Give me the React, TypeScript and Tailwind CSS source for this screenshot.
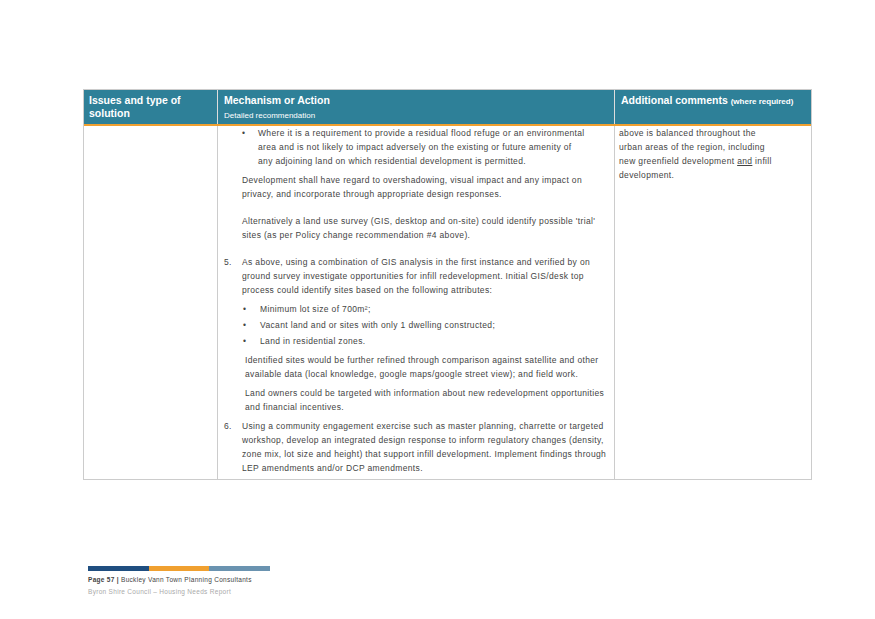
export default function App() {
  const t = "text-[8.5px] leading-[14px] text-[#444] tracking-[0.35px]";
  return (
    <div className="w-[875px] h-[619px] bg-white relative" style={{ fontFamily: '"Liberation Sans", Arial, sans-serif' }}>
      <div className="absolute left-[83px] top-[89px] w-[729px] border border-[#ccc]">
        <div className="grid grid-cols-[133px_397px_1fr] bg-[#2e8098] text-white border-b-2 border-[#f0a030] h-[36px]">
          <div className="px-[5px] pt-[4px] text-[10.5px] font-bold leading-[13px]">Issues and type of<br />solution</div>
          <div className="px-[6px] pt-[4px] border-l border-[#ddd]">
            <div className="text-[10.5px] font-bold leading-[13px]">Mechanism or Action</div>
            <div className="text-[8px] mt-[3px]">Detailed recommendation</div>
          </div>
          <div className="px-[6px] pt-[4px] border-l border-[#ddd] text-[10.5px] font-bold leading-[13px]">
            Additional comments <span className="text-[8px]">(where required)</span>
          </div>
        </div>
        <div className="grid grid-cols-[133px_397px_1fr] h-[353px]">
          <div />
          <div className={`border-l border-[#ccc] pl-[6px] pr-[6px] pt-[0px] ${t}`}>
            <div className="flex pl-[18px] pr-[20px]"><span className="w-[16px] shrink-0">•</span><span>Where it is a requirement to provide a residual flood refuge or an environmental area and is not likely to impact adversely on the existing or future amenity of any adjoining land on which residential development is permitted.</span></div>
            <p className="pl-[18px] mt-[5px]">Development shall have regard to overshadowing, visual impact and any impact on privacy, and incorporate through appropriate design responses.</p>
            <p className="pl-[18px] mt-[13px]">Alternatively a land use survey (GIS, desktop and on-site) could identify possible 'trial' sites (as per Policy change recommendation #4 above).</p>
            <div className="flex mt-[13px]"><span className="w-[18px] shrink-0">5.</span><span className="flex-1">As above, using a combination of GIS analysis in the first instance and verified by on ground survey investigate opportunities for infill redevelopment. Initial GIS/desk top process could identify sites based on the following attributes:</span></div>
            <div className="pl-[19px] mt-[5px] flex flex-col gap-[2px]">
              <div className="flex"><span className="w-[17px]">•</span>Minimum lot size of 700m²;</div>
              <div className="flex"><span className="w-[17px]">•</span>Vacant land and or sites with only 1 dwelling constructed;</div>
              <div className="flex"><span className="w-[17px]">•</span>Land in residential zones.</div>
            </div>
            <p className="pl-[21px] mt-[5px]">Identified sites would be further refined through comparison against satellite and other available data (local knowledge, google maps/google street view); and field work.</p>
            <p className="pl-[21px] mt-[5px]">Land owners could be targeted with information about new redevelopment opportunities and financial incentives.</p>
            <div className="flex mt-[5px]"><span className="w-[18px] shrink-0">6.</span><span className="flex-1">Using a community engagement exercise such as master planning, charrette or targeted workshop, develop an integrated design response to inform regulatory changes (density, zone mix, lot size and height) that support infill development. Implement findings through LEP amendments and/or DCP amendments.</span></div>
          </div>
          <div className={`border-l border-[#ccc] px-[4px] pr-[30px] pt-[0px] ${t}`}>
            above is balanced throughout the urban areas of the region, including new greenfield development <span className="underline">and</span> infill development.
          </div>
        </div>
      </div>
      <div className="absolute left-[88px] top-[566px]">
        <div className="flex h-[5px] w-[182px]">
          <div className="flex-1 bg-[#1f4e80]" />
          <div className="flex-1 bg-[#f0a030]" />
          <div className="flex-1 bg-[#6a93b0]" />
        </div>
        <div className="text-[6.5px] text-[#444] mt-[4px] tracking-[0.3px]"><b>Page 57 |</b> Buckley Vann Town Planning Consultants</div>
        <div className="text-[6.5px] text-[#aaa] mt-[2px] tracking-[0.3px]">Byron Shire Council – Housing Needs Report</div>
      </div>
    </div>
  );
}
